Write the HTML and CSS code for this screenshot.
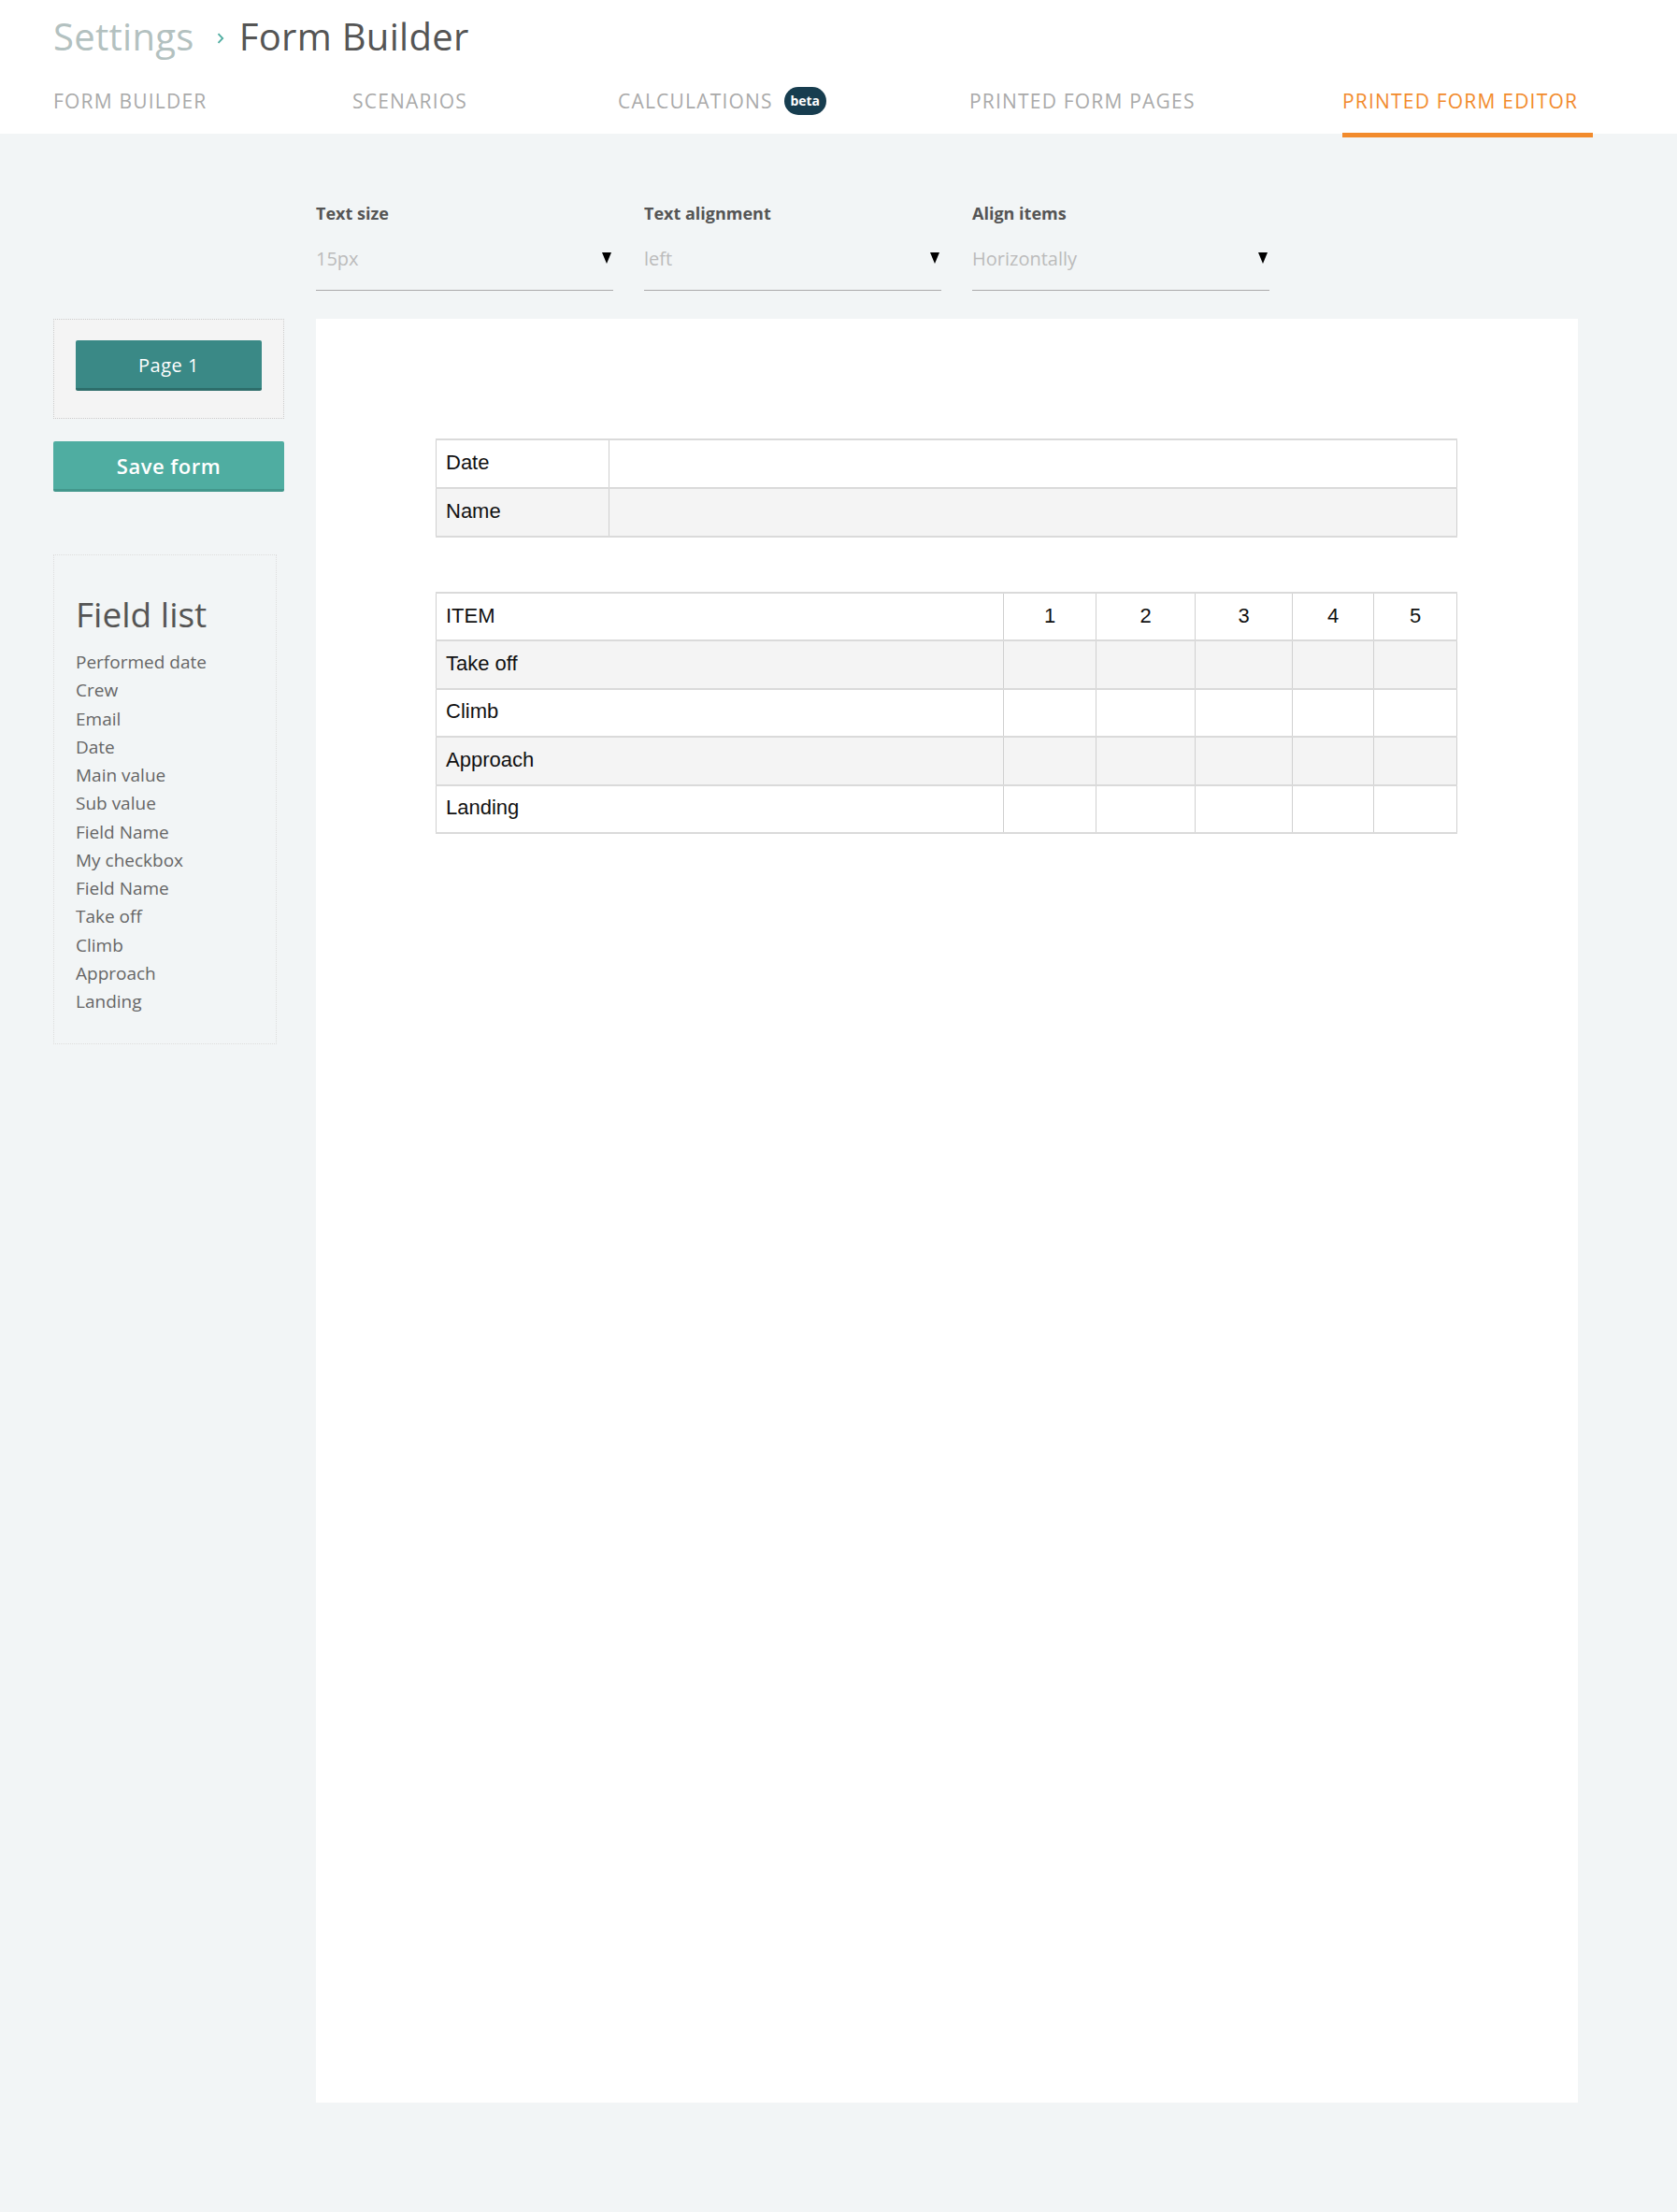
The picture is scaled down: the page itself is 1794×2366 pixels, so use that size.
FILE: index.html
```html
<!DOCTYPE html>
<html lang="en">
<head>
    <meta charset="UTF-8">
    <meta name="viewport" content="width=device-width, initial-scale=1.0">
    <title>Form Builder</title>
    <link rel="stylesheet" href="styles.css">
</head>
<body>

    <!-- Header -->
    <div class="header">
        <div class="breadcrumb">
            <span class="crumb-parent">Settings</span>
            <svg class="crumb-sep" width="8" height="12" viewBox="0 0 8 12">
                <path d="M1.5 1.2 L6.2 6 L1.5 10.8" fill="none" stroke="#4fada1" stroke-width="1.8"/>
            </svg>
            <span class="crumb-current">Form Builder</span>
        </div>
        <div class="tabs">
            <div class="tab">FORM BUILDER</div>
            <div class="tab">SCENARIOS</div>
            <div class="tab">CALCULATIONS <span class="badge">beta</span></div>
            <div class="tab">PRINTED FORM PAGES</div>
            <div class="tab active">PRINTED FORM EDITOR</div>
        </div>
    </div>

    <!-- Text options -->
    <div class="toolbar">
        <div class="option">
            <div class="option-label">Text size</div>
            <div class="select">
                <span>15px</span>
                <span class="caret"></span>
            </div>
        </div>
        <div class="option">
            <div class="option-label">Text alignment</div>
            <div class="select">
                <span>left</span>
                <span class="caret"></span>
            </div>
        </div>
        <div class="option">
            <div class="option-label">Align items</div>
            <div class="select">
                <span>Horizontally</span>
                <span class="caret"></span>
            </div>
        </div>
    </div>

    <div class="workspace">

        <!-- Sidebar -->
        <div class="sidebar">
            <div class="pages-box">
                <button class="btn-page">Page 1</button>
            </div>
            <button class="btn-save">Save form</button>

            <div class="field-list">
                <h2>Field list</h2>
                <div class="field">Performed date</div>
                <div class="field">Crew</div>
                <div class="field">Email</div>
                <div class="field">Date</div>
                <div class="field">Main value</div>
                <div class="field">Sub value</div>
                <div class="field">Field Name</div>
                <div class="field">My checkbox</div>
                <div class="field">Field Name</div>
                <div class="field">Take off</div>
                <div class="field">Climb</div>
                <div class="field">Approach</div>
                <div class="field">Landing</div>
            </div>
        </div>

        <!-- Printed page -->
        <div class="sheet">
            <table class="grid info">
                <tr><td class="label-col">Date</td><td></td></tr>
                <tr class="odd"><td class="label-col">Name</td><td></td></tr>
            </table>

            <table class="grid checks">
                <tr>
                    <td class="item-col">ITEM</td>
                    <td class="num c1">1</td>
                    <td class="num c2">2</td>
                    <td class="num c3">3</td>
                    <td class="num c4">4</td>
                    <td class="num c5">5</td>
                </tr>
                <tr class="odd"><td>Take off</td><td></td><td></td><td></td><td></td><td></td></tr>
                <tr><td>Climb</td><td></td><td></td><td></td><td></td><td></td></tr>
                <tr class="odd"><td>Approach</td><td></td><td></td><td></td><td></td><td></td></tr>
                <tr><td>Landing</td><td></td><td></td><td></td><td></td><td></td></tr>
            </table>
        </div>
    </div>

</body>
</html>
```

FILE: styles.css
```css
body {
    margin: 0;
    padding: 0;
    font-family: "Open Sans", sans-serif;
    background-color: #f2f5f6;
    color: #555;
}

/* Header */
.header {
    background-color: #fff;
    padding: 15px 57px 0 57px;
    height: 143px;
    box-sizing: border-box;
}

.breadcrumb {
    display: flex;
    align-items: center;
    font-size: 40px;
    line-height: 48px;
    letter-spacing: 0.3px;
}

.crumb-parent {
    color: #b3c1c0;
}

.crumb-sep {
    margin: 4px 16px 0 24px;
}

.crumb-current {
    color: #555;
}

.tabs {
    display: grid;
    grid-template-columns: 320px 284px 376px 399px auto;
    margin-top: 30px;
}

.tab {
    justify-self: start;
    font-size: 21px;
    line-height: 25px;
    letter-spacing: 1.2px;
    color: #aaa;
    padding: 0 16px 19px 0;
    border-bottom: 5px solid transparent;
    display: flex;
    align-items: center;
    white-space: nowrap;
}

.tab.active {
    color: #f28b2c;
    border-bottom-color: #f28b2c;
}

.badge {
    display: inline-block;
    margin-left: 12px;
    width: 45px;
    height: 30px;
    line-height: 30px;
    border-radius: 15px;
    background-color: #173d4f;
    color: #fff;
    font-size: 14px;
    font-weight: bold;
    letter-spacing: 0;
    text-align: center;
}

/* Toolbar */
.toolbar {
    display: flex;
    gap: 33px;
    padding: 74px 0 30px 338px;
}

.option {
    width: 318px;
}

.option-label {
    font-size: 18px;
    line-height: 22px;
    font-weight: bold;
    color: #555;
}

.select {
    margin-top: 20px;
    padding: 6px 2px 21px 0;
    border-bottom: 1px solid #aaa;
    display: flex;
    justify-content: space-between;
    align-items: flex-start;
    font-size: 20px;
    line-height: 24px;
    color: #bbb;
}

.caret {
    margin-top: 5px;
    width: 0;
    height: 0;
    border-left: 5.5px solid transparent;
    border-right: 5.5px solid transparent;
    border-top: 12px solid #000;
}

/* Workspace */
.workspace {
    display: flex;
    align-items: flex-start;
    gap: 34px;
    padding: 0 0 117px 57px;
}

.sidebar {
    width: 247px;
}

.pages-box {
    background-color: #f4f4f4;
    border: 1px dotted #ccc;
    padding: 22px 23px 29px 23px;
}

button {
    font-family: "Open Sans", sans-serif;
    color: #fff;
    border: none;
    border-radius: 2px;
    cursor: pointer;
}

.btn-page {
    display: block;
    width: 199px;
    height: 54px;
    padding-top: 3px;
    background-color: #3a8986;
    border-bottom: 3px solid #2d6d6a;
    font-size: 20px;
    letter-spacing: 0.5px;
}

.btn-save {
    display: block;
    margin-top: 24px;
    width: 247px;
    height: 54px;
    padding-top: 2px;
    background-color: #4fada1;
    border-bottom: 3px solid #43978c;
    font-size: 22px;
    font-weight: 600;
    letter-spacing: 0.5px;
}

.field-list {
    margin-top: 67px;
    width: 239px;
    box-sizing: border-box;
    border: 1px dotted #ddd;
    padding: 41px 23px 30px 23px;
}

.field-list h2 {
    margin: 0 0 14px 0;
    font-size: 37px;
    line-height: 44px;
    font-weight: normal;
    color: #555;
}

.field {
    font-size: 19px;
    line-height: 30.25px;
    color: #666;
}

/* Printed page */
.sheet {
    width: 1350px;
    height: 1908px;
    box-sizing: border-box;
    padding: 128px;
    background-color: #fff;
}

.grid {
    width: 1093px;
    border-collapse: collapse;
    font-family: "Liberation Sans", Arial, sans-serif;
    font-size: 22px;
    color: #111;
}

.grid td {
    border-top: 2px solid #dadada;
    border-bottom: 2px solid #dadada;
    border-left: 1px solid #d0d0d0;
    border-right: 1px solid #d0d0d0;
    padding: 0 0 2px 10px;
    height: 48px;
}

.grid tr.odd td {
    background-color: #f4f4f4;
}

.info .label-col {
    width: 174px;
}

.checks {
    margin-top: 58px;
}

.checks td {
    height: 47.4px;
}

.checks .item-col {
    width: 599px;
}

.checks .num {
    text-align: center;
    padding: 0 0 2px 0;
}

.checks .c1 { width: 98px; }
.checks .c2 { width: 106px; }
.checks .c3 { width: 103px; }
.checks .c4 { width: 87px; }
.checks .c5 { width: 88px; }
```
